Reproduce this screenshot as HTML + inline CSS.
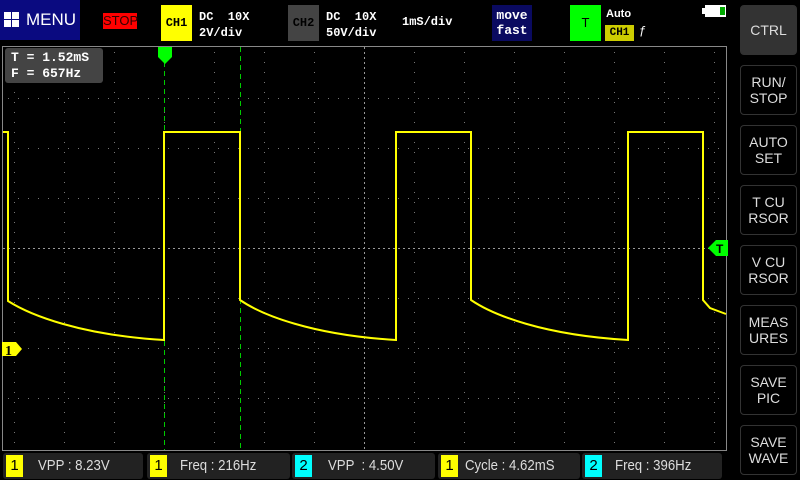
<!DOCTYPE html>
<html><head><meta charset="utf-8"><style>
*{margin:0;padding:0;box-sizing:border-box}
body{width:800px;height:480px;background:#000;position:relative;overflow:hidden;font-family:"Liberation Mono","DejaVu Sans Mono",monospace;color:#fff}
.a{position:absolute}
.btn{position:absolute;left:740px;width:57px;height:50px;border:1px solid #333;border-radius:4px;color:#ddd;font-family:"Liberation Sans",sans-serif;font-size:14px;text-align:center;display:flex;align-items:center;justify-content:center;line-height:16px}
.m{position:absolute;top:453px;height:26px;background:#222;border-radius:3px;font-family:"Liberation Sans",sans-serif;font-size:15px;color:#ddd}
.m b{position:absolute;left:3px;top:2px;width:17px;height:22px;font-weight:normal;color:#000;text-align:center;line-height:22px;font-size:15px}
.m span{position:absolute;top:4px;white-space:pre;transform:scaleX(0.88);transform-origin:0 0}
</style></head><body>
<div class="a" style="left:0;top:0;width:80px;height:40px;background:#0a0a80"></div>
<div class="a" style="left:4px;top:12px;width:16px;height:16px">
<div class="a" style="left:0;top:0;width:7px;height:7px;background:#fff"></div><div class="a" style="left:8px;top:0;width:7px;height:7px;background:#fff"></div>
<div class="a" style="left:0;top:8px;width:7px;height:7px;background:#fff"></div><div class="a" style="left:8px;top:8px;width:7px;height:7px;background:#fff"></div></div>
<div class="a" style="left:26px;top:10px;font-family:'Liberation Sans',sans-serif;font-size:17px;color:#fff">MENU</div>
<div class="a" style="left:103px;top:13px;width:34px;height:16px;background:#f00;color:#300;font-family:'Liberation Sans',sans-serif;font-size:13px;line-height:16px;text-align:center">STOP</div>
<div class="a" style="left:161px;top:5px;width:31px;height:36px;background:#ff0;color:#000;font-size:12px;font-weight:bold;line-height:36px;text-align:center">CH1</div>
<div class="a" style="left:199px;top:9px;font-size:12px;font-weight:bold;line-height:16px;white-space:pre">DC  10X
2V/div</div>
<div class="a" style="left:288px;top:5px;width:31px;height:36px;background:#444;color:#000;font-size:12px;font-weight:bold;line-height:36px;text-align:center">CH2</div>
<div class="a" style="left:326px;top:9px;font-size:12px;font-weight:bold;line-height:16px;white-space:pre">DC  10X
50V/div</div>
<div class="a" style="left:402px;top:15px;font-size:12px;font-weight:bold">1mS/div</div>
<div class="a" style="left:492px;top:5px;width:40px;height:36px;background:#0a0a60;color:#fff;font-size:13px;font-weight:bold;line-height:15px;text-align:center;padding-top:3px">move<br>fast</div>
<div class="a" style="left:570px;top:5px;width:31px;height:36px;background:#0f0;color:#000;font-family:'Liberation Sans',sans-serif;font-size:13px;line-height:36px;text-align:center">T</div>
<div class="a" style="left:606px;top:8px;font-family:'Liberation Sans',sans-serif;font-size:11px;font-weight:bold">Auto</div>
<div class="a" style="left:605px;top:25px;width:29px;height:16px;background:#cc0;color:#000;font-size:11px;font-weight:bold;line-height:16px;text-align:center">CH1</div>
<div class="a" style="left:639px;top:24px;font-size:12px">ƒ</div>
<div class="a" style="left:702px;top:8px;width:3px;height:6px;background:#fff"></div>
<div class="a" style="left:705px;top:5px;width:21px;height:12px;background:#fff"></div>
<div class="a" style="left:720px;top:7px;width:5px;height:8px;background:#0a0"></div>

<svg class="a" style="left:0;top:0" width="800" height="480">
<rect x="2.5" y="46.5" width="724" height="404" fill="none" stroke="#888" stroke-width="1"/>
<g stroke="#777" stroke-width="1" stroke-dasharray="1,9">
<line x1="14.5" y1="52" x2="14.5" y2="450"/><line x1="64.5" y1="52" x2="64.5" y2="450"/><line x1="114.5" y1="52" x2="114.5" y2="450"/><line x1="164.5" y1="52" x2="164.5" y2="450"/><line x1="214.5" y1="52" x2="214.5" y2="450"/><line x1="264.5" y1="52" x2="264.5" y2="450"/><line x1="314.5" y1="52" x2="314.5" y2="450"/><line x1="414.5" y1="52" x2="414.5" y2="450"/><line x1="464.5" y1="52" x2="464.5" y2="450"/><line x1="514.5" y1="52" x2="514.5" y2="450"/><line x1="564.5" y1="52" x2="564.5" y2="450"/><line x1="614.5" y1="52" x2="614.5" y2="450"/><line x1="664.5" y1="52" x2="664.5" y2="450"/><line x1="714.5" y1="52" x2="714.5" y2="450"/>
<line x1="8" y1="98.5" x2="726" y2="98.5"/><line x1="8" y1="148.5" x2="726" y2="148.5"/><line x1="8" y1="198.5" x2="726" y2="198.5"/><line x1="8" y1="298.5" x2="726" y2="298.5"/><line x1="8" y1="348.5" x2="726" y2="348.5"/><line x1="8" y1="398.5" x2="726" y2="398.5"/>
</g>
<g stroke="#999" stroke-dasharray="2,3"><line x1="364.5" y1="47" x2="364.5" y2="450"/><line x1="3" y1="248.5" x2="726" y2="248.5"/></g>
<g stroke="#0c0" stroke-width="1" stroke-dasharray="5,4"><line x1="164.5" y1="62" x2="164.5" y2="450"/><line x1="240.5" y1="47" x2="240.5" y2="450"/></g>
<path d="M158,47h14v10l-7,7l-7,-7z" fill="#0f0"/>
<path d="M708,248l8,-8h12v16h-12z" fill="#0f0"/><text x="716" y="253" font-family="Liberation Sans" font-size="12" font-weight="bold" fill="#000">T</text>
<path d="M2,342h14l6,7l-6,7h-14z" fill="#ff0"/><text x="5" y="355" font-family="Liberation Serif" font-size="14" font-weight="bold" fill="#000">1</text>
<g fill="none" stroke="#ff0" stroke-width="2">
<path d="M3,132H8V301C30,315 80,335 164,340V132H240V300C262,315 312,335 396,340V132H471V300C493,315 543,335 628,340V132H703V300L710,308L726,314"/>
</g>
</svg>
<div class="a" style="left:5px;top:48px;width:98px;height:35px;background:#444;border-radius:3px;font-size:13px;font-weight:bold;line-height:16px;padding:2px 0 0 6px;white-space:pre;color:#fff">T = 1.52mS
F = 657Hz</div>

<div class="btn" style="top:5px;background:#333">CTRL</div>
<div class="btn" style="top:65px">RUN/<br>STOP</div>
<div class="btn" style="top:125px">AUTO<br>SET</div>
<div class="btn" style="top:185px">T  CU<br>RSOR</div>
<div class="btn" style="top:245px">V  CU<br>RSOR</div>
<div class="btn" style="top:305px">MEAS<br>URES</div>
<div class="btn" style="top:365px">SAVE<br>PIC</div>
<div class="btn" style="top:425px">SAVE<br>WAVE</div>

<div class="m" style="left:3px;width:140px"><b style="background:#ff0">1</b><span style="left:35px">VPP : 8.23V</span></div>
<div class="m" style="left:147px;width:143px"><b style="background:#ff0">1</b><span style="left:33px">Freq : 216Hz</span></div>
<div class="m" style="left:292px;width:143px"><b style="background:#0ff">2</b><span style="left:36px">VPP  : 4.50V</span></div>
<div class="m" style="left:438px;width:142px"><b style="background:#ff0">1</b><span style="left:27px">Cycle : 4.62mS</span></div>
<div class="m" style="left:582px;width:140px"><b style="background:#0ff">2</b><span style="left:33px">Freq : 396Hz</span></div>
</body></html>
